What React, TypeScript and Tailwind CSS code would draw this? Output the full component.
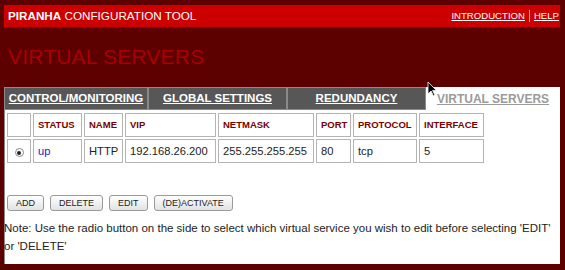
import React from 'react';

const tabs = [
  { label: 'CONTROL/MONITORING', w: 'w-[144px]' },
  { label: 'GLOBAL SETTINGS', w: 'w-[139px]' },
  { label: 'REDUNDANCY', w: 'w-[139px]' },
];

const cols = [
  { label: '', w: 'w-[24px]' },
  { label: 'STATUS', w: 'w-[49px]' },
  { label: 'NAME', w: 'w-[39px]' },
  { label: 'VIP', w: 'w-[91px]' },
  { label: 'NETMASK', w: 'w-[96px]' },
  { label: 'PORT', w: 'w-[35px]' },
  { label: 'PROTOCOL', w: 'w-[64px]' },
  { label: 'INTERFACE', w: 'w-[65px]' },
];

const row = ['HTTP', '192.168.26.200', '255.255.255.255', '80', 'tcp', '5'];

const Btn: React.FC<{ label: string }> = ({ label }) => (
  <button className="h-[16px] px-[8px] rounded-[3px] border border-[#9a9a9a] bg-gradient-to-b from-white to-[#e2e2e2] text-[9px] leading-none text-[#222]">
    {label}
  </button>
);

const App: React.FC = () => {
  return (
    <div className="relative w-[565px] h-[270px] overflow-hidden bg-[#5c0000] font-['Liberation_Sans',Arial,sans-serif]">
      <div className="pt-[5px] pl-[4px] pr-[5px]">
        <div className="h-[22px] bg-[#cc0000] flex items-center justify-between pl-[4px] pr-[1px] text-white">
          <div className="text-[11.7px]">
            <span className="font-bold">PIRANHA</span> CONFIGURATION TOOL
          </div>
          <div className="text-[9.6px] flex items-center gap-[4px]">
            <span className="underline">INTRODUCTION</span>
            <span className="w-px h-[12px] bg-[#f0a0a0]" />
            <span className="underline">HELP</span>
          </div>
        </div>
      </div>

      <div className="h-[60px] pl-[8px] pt-[19px] text-[21px] text-[#a80000] leading-none tracking-[0.2px]">
        VIRTUAL SERVERS
      </div>

      <div className="mx-[4px] mr-[5px] flex h-[23px]">
        {tabs.map((t) => (
          <div
            key={t.label}
            className={`${t.w} bg-[#575757] border border-[#8a8a8a] flex items-center justify-center text-[11.5px] font-bold text-white underline`}
          >
            {t.label}
          </div>
        ))}
        <div className="flex-1 bg-white flex items-center justify-center text-[12px] font-bold text-[#9a9a9a] underline">
          VIRTUAL SERVERS
        </div>
      </div>

      <div className="mx-[4px] mr-[5px] h-[154px] bg-white border-l border-[#8a8a8a] pt-[1px]">
        <table className="border-separate border-spacing-[2px] table-fixed text-[11.2px] text-[#222]">
          <thead>
            <tr className="h-[24px]">
              {cols.map((c, i) => (
                <th
                  key={i}
                  className={`${c.w} border border-[#b4b4b4] text-left pl-[4px] text-[9.5px] font-bold text-[#7a0000]`}
                >
                  {c.label}
                </th>
              ))}
            </tr>
          </thead>
          <tbody>
            <tr className="h-[24px]">
              <td className="border border-[#b4b4b4] text-center">
                <span className="inline-flex w-[9px] h-[9px] rounded-full border border-[#888] items-center justify-center bg-white">
                  <span className="w-[4px] h-[4px] rounded-full bg-[#222]" />
                </span>
              </td>
              <td className="border border-[#b4b4b4] pl-[4px]">
                <span className="text-[#2424c8]">up</span>
              </td>
              {row.map((v, i) => (
                <td key={i} className="border border-[#b4b4b4] pl-[4px]">
                  {v}
                </td>
              ))}
            </tr>
          </tbody>
        </table>

        <div className="mt-[30px] pl-[2px] flex gap-[6px]">
          <Btn label="ADD" />
          <Btn label="DELETE" />
          <Btn label="EDIT" />
          <Btn label="(DE)ACTIVATE" />
        </div>

        <p className="mt-[8px] -ml-[1px] pr-[9px] text-[11.5px] leading-[18px] text-[#222]">
          Note: Use the radio button on the side to select which virtual service you wish to edit before selecting 'EDIT' or 'DELETE'
        </p>
      </div>

      {/* mouse pointer */}
      <svg className="absolute left-[427px] top-[81px]" width="11" height="16" viewBox="0 0 11 16">
        <path d="M1 1 L1 13 L4 10 L6.5 15 L8 14.3 L5.6 9.4 L9.5 9.4 Z" fill="#000" stroke="#fff" strokeWidth="0.8" />
      </svg>
    </div>
  );
};

export default App;
